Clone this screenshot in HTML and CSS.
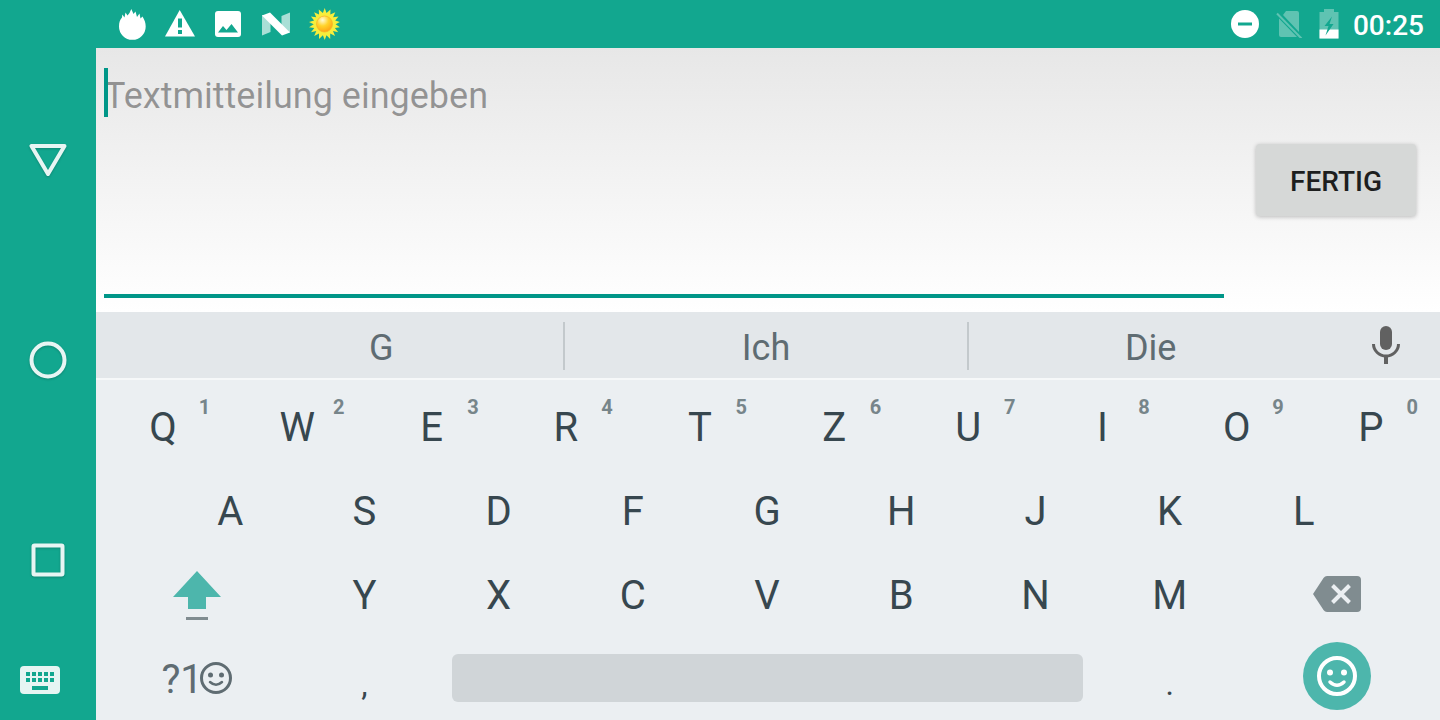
FILE: index.html
```
<!DOCTYPE html>
<html lang="de">
<head>
    <meta charset="UTF-8">
    <meta name="viewport" content="width=device-width, initial-scale=1.0">
    <title>Textmitteilung</title>
    <link rel="stylesheet" href="styles.css">
</head>
<body>
    <nav class="navbar">
        <button type="button" class="nav-button" aria-label="Zurück">
            <svg width="40" height="40" viewBox="0 0 40 40"><path d="M3.500 6H36.500L20 34Z" fill="none" stroke="#e7f5f3" stroke-width="4" stroke-linejoin="round"/></svg>
        </button>
        <button type="button" class="nav-button" aria-label="Startseite">
            <svg width="40" height="40" viewBox="0 0 40 40"><circle cx="20" cy="20" r="16.500" fill="none" stroke="#e7f5f3" stroke-width="4"/></svg>
        </button>
        <button type="button" class="nav-button" aria-label="Übersicht">
            <svg width="40" height="40" viewBox="0 0 40 40"><rect x="5.500" y="5.500" width="29" height="29" rx="1" fill="none" stroke="#e7f5f3" stroke-width="4"/></svg>
        </button>
        <button type="button" class="nav-keyboard" aria-label="Tastatur wechseln">
            <svg width="40" height="28" viewBox="0 0 40 28">
                <rect width="40" height="28" rx="4" fill="#e7f5f3"/>
                <path d="M6 6h4v4H6zM12 6h4v4h-4zM18 6h4v4h-4zM24 6h4v4h-4zM30 6h4v4h-4zM6 12h4v4H6zM12 12h4v4h-4zM18 12h4v4h-4zM24 12h4v4h-4zM30 12h4v4h-4zM12 20h16v4H12z" fill="#12a78f"/>
            </svg>
        </button>
    </nav>

    <div class="screen">
        <header class="statusbar">
            <div class="status-icons">
                <svg width="32" height="32" viewBox="0 0 32 32"><path d="M3 18.500C3 14 4 12 6 9.500L6.300 6.500 8.500 9.500 9.500 4.500 11.500 7.500 13.500 5 15.300 1 17.500 6 19.500 3.500 21 9 23.500 5.500 24.500 10.500 26.500 8.500C28.500 12 29.700 14.500 29.700 18.500A13.350 13.350 0 0 1 3 18.500Z" fill="#fff"/></svg>
                <svg width="32" height="32" viewBox="0 0 32 32"><path d="M1 28.500 15.700 2 31 28.500Z" fill="#fff"/><path d="M14 10.500h4v9h-4zM14 22h4v4h-4z" fill="#12a78f"/></svg>
                <svg width="32" height="32" viewBox="0 0 32 32"><rect x="3" y="3" width="26" height="26" rx="3" fill="#fff"/><path d="M6 24.500 11 18 14.500 22 19.500 16 26 24.500Z" fill="#12a78f"/></svg>
                <svg width="32" height="32" viewBox="0 0 32 32"><path d="M2 7V27.500L10.500 24V8ZM30 4.500V24.500L21.500 24V8Z" fill="#a9dfd6"/><path d="M2 7.500 10 4.500 30 24.500 22 27.500Z" fill="#fff"/></svg>
                <svg width="32" height="32" viewBox="0 0 32 32">
                    <defs>
                        <radialGradient id="sun" cx=".38" cy=".25" r=".75">
                            <stop offset="0" stop-color="#fffbd8"/>
                            <stop offset=".5" stop-color="#ffd42c"/>
                            <stop offset="1" stop-color="#ffa616"/>
                        </radialGradient>
                    </defs>
                    <path transform="translate(.7 0)" d="M16 0 17.800 5 21.800 1.400 21.600 6.600 26.600 4.300 24.400 9.200 29.800 8.500 26.500 12.500 31.200 14 26.900 16.200 31.200 19.200 26.200 20 29.500 24.200 24.300 22.900 26.400 27.900 21.500 25.600 21.500 30.900 17.800 27.200 16 32 14.200 27.200 10.300 30.900 10.300 25.600 5.500 27.900 7.600 22.900 2.300 24.200 5.600 20 .300 19.200 5 16.200 .300 14 5.400 12.500 2.200 8.500 7.500 9.200 5.400 4.300 10.300 6.600 10.100 1.400 14.200 5Z" fill="#f7ee3c"/>
                    <circle cx="16.500" cy="16" r="8" fill="url(#sun)" stroke="#f9b52a" stroke-width=".8"/>
                </svg>
            </div>
            <div class="status-system">
                <svg width="28" height="28" viewBox="0 0 28 28"><circle cx="14" cy="14" r="14" fill="#fff"/><path d="M7 12.500h14v3H7z" fill="#12a78f"/></svg>
                <svg width="28" height="28" viewBox="0 0 28 28"><path d="M11 1H22Q24 1 24 3V22L8 5ZM4 8.500 22 27H6Q4 27 4 25Z" fill="#5fc3b2"/><path d="M2 3.500 26.500 28.500" stroke="#5fc3b2" stroke-width="2"/></svg>
                <svg width="20" height="30" viewBox="0 0 20 30"><path d="M5 0H15V3H19.500V29.500H.500V3H5Z" fill="#5fc3b2"/><path d="M.500 20.500h19v9H.500z" fill="#fff"/><path d="M13 7.500 5.500 17H9.500L6.500 26.500 14.500 15H10.500Z" fill="#12a78f"/></svg>
                <time class="clock">00:25</time>
            </div>
        </header>

        <main class="editor">
            <div class="field">
                <textarea class="message" aria-label="Textmitteilung" placeholder="Textmitteilung eingeben"></textarea>
                <span class="cursor"></span>
            </div>
            <button type="button" class="done">FERTIG</button>
        </main>

        <section class="keyboard">
            <div class="suggestions">
                <button type="button" class="suggestion">G</button>
                <button type="button" class="suggestion middle">Ich</button>
                <button type="button" class="suggestion">Die</button>
                <button type="button" class="mic" aria-label="Spracheingabe">
                    <svg width="28" height="38" viewBox="0 0 28 38"><rect x="8" width="12" height="24" rx="6" fill="#616161"/><path d="M1.500 18A12.500 12 0 0 0 26.500 18" fill="none" stroke="#616161" stroke-width="3"/><path d="M12 30h4v8h-4z" fill="#616161"/></svg>
                </button>
            </div>

            <div class="keys">
                <div class="row">
                    <button type="button" class="key">Q<span class="digit">1</span></button>
                    <button type="button" class="key">W<span class="digit">2</span></button>
                    <button type="button" class="key">E<span class="digit">3</span></button>
                    <button type="button" class="key">R<span class="digit">4</span></button>
                    <button type="button" class="key">T<span class="digit">5</span></button>
                    <button type="button" class="key">Z<span class="digit">6</span></button>
                    <button type="button" class="key">U<span class="digit">7</span></button>
                    <button type="button" class="key">I<span class="digit">8</span></button>
                    <button type="button" class="key">O<span class="digit">9</span></button>
                    <button type="button" class="key">P<span class="digit">0</span></button>
                </div>
                <div class="row row-inset">
                    <button type="button" class="key">A</button>
                    <button type="button" class="key">S</button>
                    <button type="button" class="key">D</button>
                    <button type="button" class="key">F</button>
                    <button type="button" class="key">G</button>
                    <button type="button" class="key">H</button>
                    <button type="button" class="key">J</button>
                    <button type="button" class="key">K</button>
                    <button type="button" class="key">L</button>
                </div>
                <div class="row">
                    <button type="button" class="key key-wide" aria-label="Umschalttaste">
                        <svg width="48" height="50" viewBox="0 0 48 50"><path d="M24 0 48 26H33V38H15V26H0Z" fill="#4db6ac"/><path d="M13 46h22v3H13z" fill="#808c90"/></svg>
                    </button>
                    <button type="button" class="key">Y</button>
                    <button type="button" class="key">X</button>
                    <button type="button" class="key">C</button>
                    <button type="button" class="key">V</button>
                    <button type="button" class="key">B</button>
                    <button type="button" class="key">N</button>
                    <button type="button" class="key">M</button>
                    <button type="button" class="key key-wide key-icon" aria-label="Löschen">
                        <svg width="48" height="36" viewBox="0 0 48 36"><path d="M14 0H44Q48 0 48 4V32Q48 36 44 36H14Q12 36 10.500 34L0 18 10.500 2Q12 0 14 0Z" fill="#808c90"/><path d="M19.500 9.500 36.500 26.500M36.500 9.500 19.500 26.500" stroke="#ebeff2" stroke-width="4"/></svg>
                    </button>
                </div>
                <div class="row">
                    <button type="button" class="key key-wide symbols">?1<svg width="32" height="32" viewBox="0 0 32 32"><circle cx="16" cy="16" r="14.500" fill="none" stroke="#5f6c72" stroke-width="3"/><circle cx="10.500" cy="13" r="2.500" fill="#5f6c72"/><circle cx="21.500" cy="13" r="2.500" fill="#5f6c72"/><path d="M10 20Q16 25.500 22 20" fill="none" stroke="#5f6c72" stroke-width="2.500" stroke-linecap="round"/></svg></button>
                    <button type="button" class="key key-mark">,</button>
                    <button type="button" class="key key-space key-icon" aria-label="Leertaste"><span class="space-bar"></span></button>
                    <button type="button" class="key key-mark">.</button>
                    <button type="button" class="key key-wide key-icon key-emoji" aria-label="Emoji">
                        <svg width="68" height="68" viewBox="0 0 68 68"><circle cx="34" cy="34" r="34" fill="#4db6ac"/><circle cx="34" cy="34" r="18" fill="none" stroke="#fff" stroke-width="4"/><circle cx="27" cy="30.500" r="3" fill="#fff"/><circle cx="41" cy="30.500" r="3" fill="#fff"/><path d="M27 40Q34 46.500 41 40" fill="none" stroke="#fff" stroke-width="3.500" stroke-linecap="round"/></svg>
                    </button>
                </div>
            </div>
        </section>
    </div>
</body>
</html>
```
FILE: styles.css
```
:root {
    --bar: #12a78f;
    --accent: #009688;
    --strip: #e3e7ea;
    --keyboard: #ebeff2;
    --key-text: #37474f;
    --muted-text: #5f6c72;
}

* {
    box-sizing: border-box;
}

body {
    margin: 0;
    min-height: 100vh;
    display: flex;
    font-family: Roboto, sans-serif;
    background-color: var(--bar);
}

button {
    margin: 0;
    padding: 0;
    border: none;
    background: none;
    font-family: inherit;
    cursor: pointer;
}

svg {
    display: block;
    flex-shrink: 0;
}

/* Navigation bar */

.navbar {
    width: 96px;
    flex-shrink: 0;
    display: flex;
    flex-direction: column;
    padding-top: 60px;
}

.nav-button {
    flex: 1;
    display: flex;
    justify-content: center;
    align-items: center;
}

.nav-button svg {
    filter: drop-shadow(0 1px 1px rgba(0, 0, 0, 0.2));
}

.nav-keyboard {
    height: 60px;
    padding: 6px 20px 26px;
}

.screen {
    flex: 1;
    min-width: 0;
    display: flex;
    flex-direction: column;
}

/* Status bar */

.statusbar {
    height: 48px;
    padding: 0 16px 0 20px;
    display: flex;
    justify-content: space-between;
    align-items: center;
}

.status-icons {
    display: flex;
    gap: 16px;
}

.status-system {
    display: flex;
    align-items: center;
    gap: 16px;
}

.clock {
    color: #fff;
    font-size: 28px;
    font-weight: 500;
    line-height: 32px;
    padding-top: 4px;
    margin-left: -2px;
}

/* Message editor */

.editor {
    flex: 1;
    display: flex;
    align-items: center;
    gap: 32px;
    padding: 0 24px 0 8px;
    background: linear-gradient(#e7e7e7, #fff);
}

.field {
    position: relative;
    flex: 1;
    align-self: stretch;
    display: flex;
    padding: 20px 0 14px;
}

.message {
    flex: 1;
    margin: 0;
    padding: 6px 0 0;
    border: none;
    border-bottom: 4px solid var(--accent);
    outline: none;
    resize: none;
    background: transparent;
    color: #212121;
    font-family: inherit;
    font-size: 36px;
    line-height: 44px;
}

.message::placeholder {
    color: rgba(0, 0, 0, 0.38);
}

.cursor {
    position: absolute;
    top: 20px;
    left: 0;
    width: 4px;
    height: 49px;
    background-color: var(--accent);
}

.done {
    width: 160px;
    height: 72px;
    padding-top: 2px;
    border-radius: 4px;
    background-color: #d6d8d7;
    box-shadow: 0 1px 4px rgba(0, 0, 0, 0.25);
    color: #1d1e1e;
    font-size: 28px;
    font-weight: 500;
}

/* Keyboard */

.keyboard {
    background-color: var(--keyboard);
}

.suggestions {
    height: 68px;
    padding-top: 2px;
    padding-left: 104px;
    display: flex;
    align-items: center;
    background-color: var(--strip);
    border-bottom: 2px solid #f6f8f9;
}

.suggestion {
    flex: 9;
    height: 48px;
    padding-top: 4px;
    color: var(--muted-text);
    font-size: 36px;
    line-height: 44px;
}

.suggestion.middle {
    flex: 10;
    border-left: 2px solid #c3c9cc;
    border-right: 2px solid #c3c9cc;
}

.mic {
    width: 108px;
    padding-bottom: 2px;
    display: flex;
    justify-content: center;
}

.keys {
    padding: 4px 2px 0 0;
}

.row {
    height: 84px;
    display: flex;
}

.row-inset {
    padding: 0 5%;
}

.key {
    position: relative;
    flex: 2;
    display: flex;
    justify-content: center;
    align-items: center;
    padding-top: 4px;
    color: var(--key-text);
    font-size: 40px;
    line-height: 48px;
}

.key-wide {
    flex: 3;
}

.key-icon {
    padding-top: 0;
}

.key-space {
    flex: 10;
}

.space-bar {
    flex: 1;
    height: 48px;
    margin: 0 20px;
    border-radius: 6px;
    background-color: #d0d5d8;
}

.key-mark {
    padding-top: 12px;
    font-size: 32px;
}

.key-emoji {
    padding-bottom: 4px;
}

.symbols {
    color: var(--muted-text);
}

.symbols svg {
    margin: 0 0 4px -3px;
}

.digit {
    position: absolute;
    top: 11px;
    right: 20px;
    color: #77858a;
    font-size: 20px;
    font-weight: 700;
    line-height: 24px;
}
```
